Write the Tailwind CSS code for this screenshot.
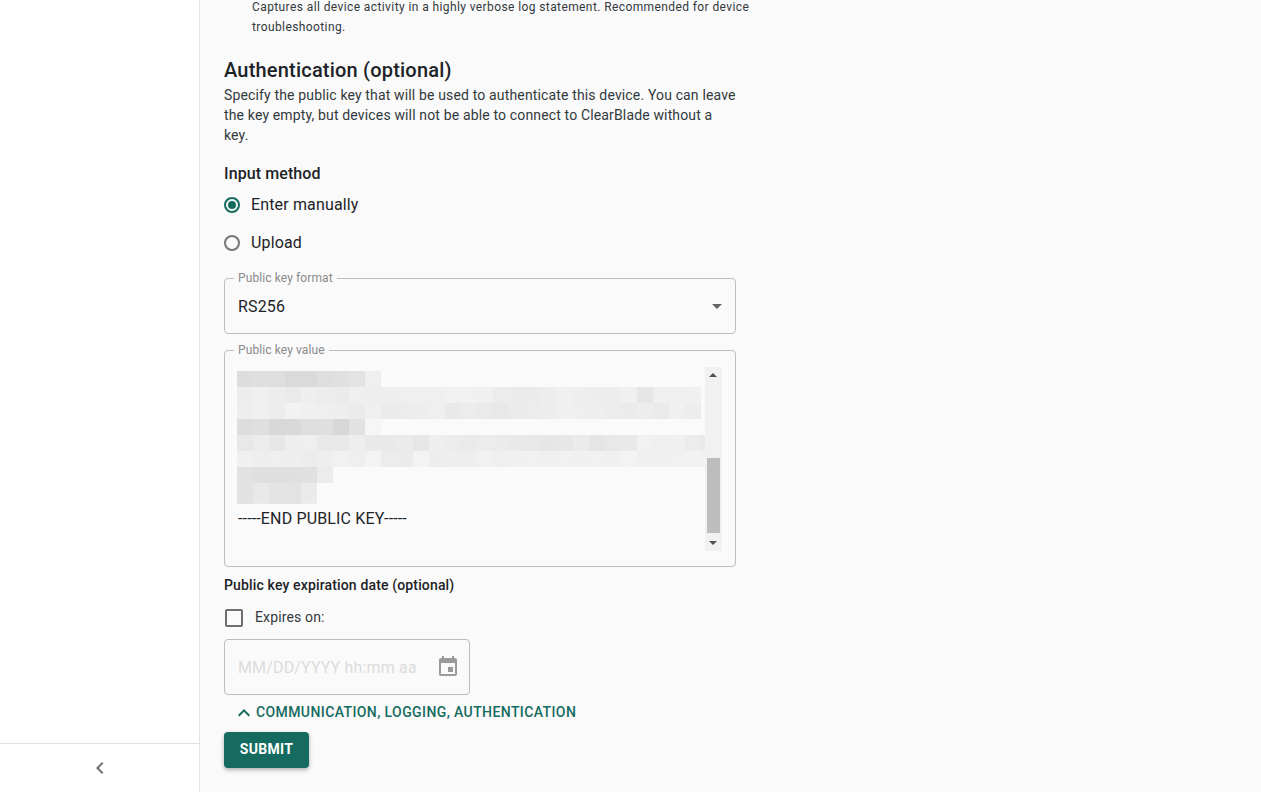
<!DOCTYPE html>
<html lang="en">
<head>
    <meta charset="UTF-8">
    <title>Create device</title>
    <script src="https://cdn.jsdelivr.net/npm/@tailwindcss/browser@4"></script>
</head>
<body class="bg-[#fafafa] text-[#1d2327] font-['Roboto',sans-serif]">
    <div class="flex h-[792px] overflow-hidden">
        <!-- sidebar -->
        <aside class="w-[200px] shrink-0 flex flex-col justify-end bg-white border-r border-[#e2e2e2]">
            <div class="h-[49px] border-t border-[#e0e0e0] flex items-center justify-center">
                <svg class="w-6 h-6 text-[#707070]" viewBox="0 0 24 24" fill="currentColor"><path d="M15.41 7.41 14 6l-6 6 6 6 1.41-1.41L10.83 12z"/></svg>
            </div>
        </aside>

        <main class="flex-1 pl-6 -mt-[3px]">
            <p class="w-[500px] ml-[28px] text-[12px] leading-[20px] tracking-[0.4px] text-[#33393d]">Captures all device activity in a highly verbose log statement. Recommended for device troubleshooting.</p>

            <section class="w-[512px] mt-[19px]">
                <h2 class="text-[20px] leading-[28px] font-medium tracking-[0.2px]">Authentication (optional)</h2>
                <p class="mt-[1px] text-[14px] leading-[20px] tracking-[0.15px] text-[#33393d]">Specify the public key that will be used to authenticate this device. You can leave the key empty, but devices will not be able to connect to ClearBlade without a key.</p>

                <h3 class="mt-[19px] text-[16px] leading-[20px] font-medium tracking-[0.1px]">Input method</h3>
                <div class="mt-[2px] flex flex-col">
                    <label class="h-[38px] flex items-center gap-[11px] text-[16px] tracking-[0.15px]">
                        <span class="w-4 h-4 rounded-full border-2 border-[#156b60] flex items-center justify-center"><span class="w-2 h-2 rounded-full bg-[#156b60]"></span></span>
                        Enter manually
                    </label>
                    <label class="h-[38px] flex items-center gap-[11px] text-[16px] tracking-[0.15px]">
                        <span class="w-4 h-4 rounded-full border-2 border-[#757575]"></span>
                        Upload
                    </label>
                </div>

                <div class="relative mt-[16px] h-[56px] border border-[#bdbdbd] rounded flex items-center justify-between pl-[13px] pr-[13px]">
                    <span class="absolute left-[9px] -top-[8px] px-[4px] bg-[#fafafa] text-[12px] leading-[14px] tracking-[0.1px] text-[#8a8a8a]">Public key format</span>
                    <span class="pt-[1px] text-[16px] tracking-[0.15px]">RS256</span>
                    <span class="w-0 h-0 border-x-[5px] border-x-transparent border-t-[5px] border-t-[#666]"></span>
                </div>

                <div class="relative mt-[16px] h-[217px] border border-[#bdbdbd] rounded pl-[12px] pr-[13px] pt-[16px] flex justify-between">
                    <span class="absolute left-[9px] -top-[8px] px-[4px] bg-[#fafafa] text-[12px] leading-[14px] tracking-[0.1px] text-[#8a8a8a]">Public key value</span>
                    <div class="w-[468px]">
                        <div id="blur" class="w-full h-[133px] overflow-hidden mt-[4px]"></div>
                        <p class="mt-[3px] pl-[1px] text-[16px] leading-[24px] tracking-[0.15px]">-----END PUBLIC KEY-----</p>
                    </div>
                    <div class="w-[17px] h-[184px] shrink-0 bg-[#f1f1f1] flex flex-col items-center justify-between pt-[6px] pb-[6px] pr-[1px] relative">
                        <span class="w-0 h-0 border-x-[4px] border-x-transparent border-b-[4px] border-b-[#505050]"></span>
                        <span class="absolute left-[2px] right-[2px] top-[91px] h-[75px] bg-[#bdbdbd]"></span>
                        <span class="w-0 h-0 border-x-[4px] border-x-transparent border-t-[4px] border-t-[#505050]"></span>
                    </div>
                </div>

                <h3 class="mt-[8px] text-[14px] leading-[20px] font-medium tracking-[0.15px]">Public key expiration date (optional)</h3>
                <label class="mt-[10px] flex items-center gap-[12px] pl-[1px] h-[24px] text-[14px] tracking-[0.15px] text-[#33393d]">
                    <span class="w-[18px] h-[18px] mt-[1px] border-2 border-[#6e6e6e] rounded-[2px]"></span>
                    Expires on:
                </label>
                <div class="mt-[10px] w-[246px] h-[56px] border border-[#bdbdbd] rounded flex items-center justify-between pl-[13px] pr-[9px]">
                    <span class="pt-[1px] text-[16px] tracking-[0.15px] text-[#dcdcdc]">MM/DD/YYYY hh:mm aa</span>
                    <svg class="w-6 h-6 text-[#9a9a9a]" viewBox="0 0 24 24" fill="currentColor"><path d="M17 12h-5v5h5v-5zM16 1v2H8V1H6v2H5c-1.11 0-1.99.9-1.99 2L3 19c0 1.1.89 2 2 2h14c1.1 0 2-.9 2-2V5c0-1.1-.9-2-2-2h-1V1h-2zm3 18H5V8h14v11z"/></svg>
                </div>
                <button class="mt-[6px] ml-[8px] h-[24px] flex items-center text-[14px] font-medium tracking-[0.4px] text-[#156b60]">
                    <svg class="w-6 h-6" viewBox="0 0 24 24" fill="currentColor"><path d="M7.41 15.41 12 10.83l4.59 4.58L18 14l-6-6-6 6z"/></svg>
                    <span class="pb-[2px]">COMMUNICATION, LOGGING, AUTHENTICATION</span>
                </button>
                <button class="mt-[7px] block h-[36px] w-[85px] pb-[2px] rounded bg-[#156b60] text-white text-[14px] font-bold tracking-[0.3px] shadow-[0_2px_4px_rgba(0,0,0,0.3)]">SUBMIT</button>
            </section>
        </main>
    </div>

    <script>
        // blurred key block, grey level per cell
        var rows = [
            'dddfdedadadee0e3ef',
            'edf0edeaeeecebefeeeeefefeff1f1f0ecebebedf0eeededf0e6efeff0',
            'eef0edf2f0efeeebefebecedefe9eceae8ebecedf0efeeecebedeaf0ed',
            'dddfd8d9dedfd7e2f6',
            'e8ece7eeefe9e9eee9e9ebe7eeeceaecebe9e8e6e7ebe5e8e9f1eff0ece9f4',
            'f0eeefeeeceef1eff3ecebf3edeeeef1eff0f1f0f1f0f1f0f3f0f0f1f2f1f6',
            'e2dfdfdfe0ec',
            'e2e8e4e3ea',
            'e3eae4e3ec'
        ];
        var blur = document.getElementById('blur');
        rows.forEach(function(hex) {
            var row = document.createElement('div');
            row.className = 'flex h-[16px]';
            for (var i = 0; i < hex.length; i += 2) {
                var cell = document.createElement('div');
                cell.style.background = '#' + hex.substr(i, 2).repeat(3);
                cell.className = i / 2 === 29 ? 'w-[4px] h-[16px] shrink-0' : 'w-[16px] h-[16px] shrink-0';
                row.appendChild(cell);
            }
            blur.appendChild(row);
        });
    </script>
</body>
</html>
